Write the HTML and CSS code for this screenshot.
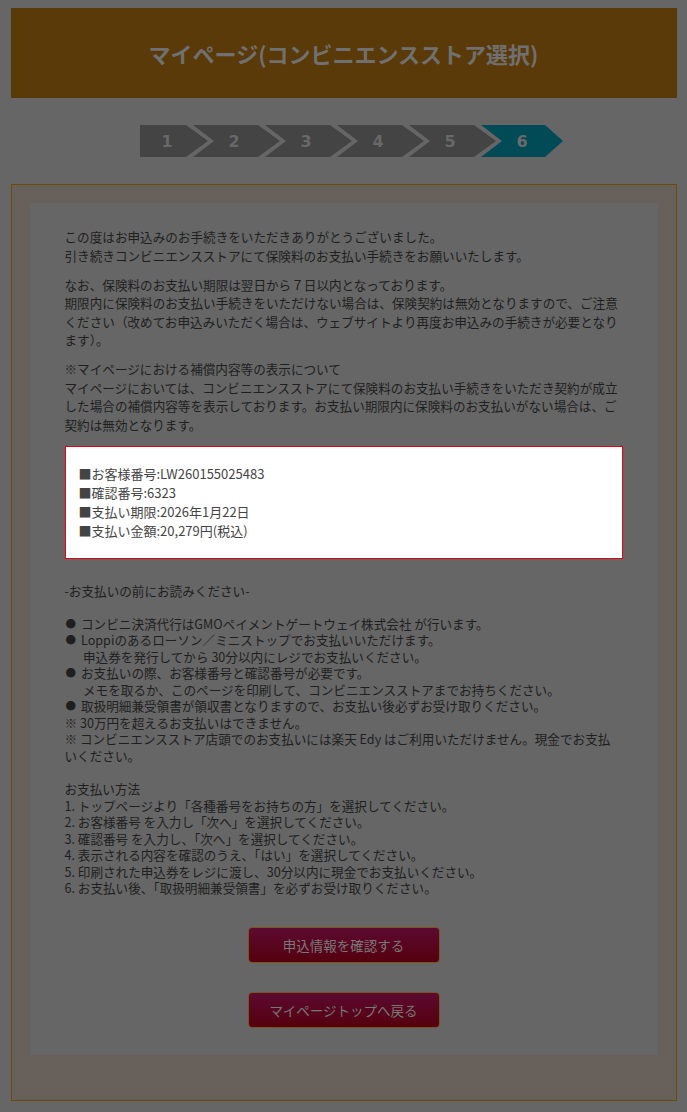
FILE: index.html
```html
<!DOCTYPE html>
<html lang="ja">
<head>
<meta charset="utf-8">
<title>マイページ(コンビニエンスストア選択)</title>
<link rel="stylesheet" href="styles.css">
</head>
<body>
<div class="page">
  <header class="header"><h1>マイページ(コンビニエンスストア選択)</h1></header>

  <ol class="steps">
    <li class="step step-first">1</li>
    <li class="step step-next">2</li>
    <li class="step step-next">3</li>
    <li class="step step-next">4</li>
    <li class="step step-next">5</li>
    <li class="step step-next step-active">6</li>
  </ol>

  <section class="box">
    <div class="panel">
      <p>この度はお申込みのお手続きをいただきありがとうございました。<br>引き続きコンビニエンスストアにて保険料のお支払い手続きをお願いいたします。</p>
      <p>なお、保険料のお支払い期限は翌日から７日以内となっております。<br>期限内に保険料のお支払い手続きをいただけない場合は、保険契約は無効となりますので、ご注意ください（改めてお申込みいただく場合は、ウェブサイトより再度お申込みの手続きが必要となります）。</p>
      <p>※マイページにおける補償内容等の表示について<br>マイページにおいては、コンビニエンスストアにて保険料のお支払い手続きをいただき契約が成立した場合の補償内容等を表示しております。お支払い期限内に保険料のお支払いがない場合は、ご契約は無効となります。</p>

      <div class="info">
        <div>■お客様番号:LW260155025483</div>
        <div>■確認番号:6323</div>
        <div>■支払い期限:2026年1月22日</div>
        <div>■支払い金額:20,279円(税込)</div>
      </div>

      <div class="notes">
        <div class="notes-title">-お支払いの前にお読みください-</div>
        <ul class="bullets">
          <li><span class="dot">●</span><span class="txt">コンビニ決済代行はGMOペイメントゲートウェイ株式会社 が行います。</span></li>
          <li><span class="dot">●</span><span class="txt">Loppiのあるローソン／ミニストップでお支払いいただけます。<span class="cont">申込券を発行してから 30分以内にレジでお支払いください。</span></span></li>
          <li><span class="dot">●</span><span class="txt">お支払いの際、お客様番号と確認番号が必要です。<span class="cont">メモを取るか、このページを印刷して、コンビニエンスストアまでお持ちください。</span></span></li>
          <li><span class="dot">●</span><span class="txt">取扱明細兼受領書が領収書となりますので、お支払い後必ずお受け取りください。</span></li>
        </ul>
        <div>※ 30万円を超えるお支払いはできません。</div>
        <div>※ コンビニエンスストア店頭でのお支払いには楽天 Edy はご利用いただけません。現金でお支払いください。</div>

        <div class="method-title">お支払い方法</div>
        <ol class="method">
          <li>1.&nbsp;トップページより「各種番号をお持ちの方」を選択してください。</li>
          <li>2.&nbsp;お客様番号 を入力し「次へ」を選択してください。</li>
          <li>3.&nbsp;確認番号 を入力し、「次へ」を選択してください。</li>
          <li>4.&nbsp;表示される内容を確認のうえ、「はい」を選択してください。</li>
          <li>5.&nbsp;印刷された申込券をレジに渡し、30分以内に現金でお支払いください。</li>
          <li>6.&nbsp;お支払い後、「取扱明細兼受領書」を必ずお受け取りください。</li>
        </ol>
      </div>

      <div class="actions">
        <a class="btn" href="#">申込情報を確認する</a>
        <a class="btn" href="#">マイページトップへ戻る</a>
      </div>
    </div>
  </section>
</div>
</body>
</html>
```

FILE: styles.css
```css
html, body {
  margin: 0;
  padding: 0;
}
body {
  background: #666666;
  font-family: "Noto Sans CJK JP", "Noto Sans", sans-serif;
}
.page {
  width: 666px;
  margin: 8px auto 0;
  padding-bottom: 10px;
}
.header {
  height: 90px;
  background: #5a3a08;
  display: flex;
  align-items: center;
  justify-content: center;
}
.header h1 {
  margin: 0;
  font-size: 22px;
  font-weight: bold;
  color: #707070;
}

.steps {
  list-style: none;
  display: flex;
  height: 32px;
  margin: 27px 0 27px 129.5px;
  padding: 0;
}
.step {
  height: 32px;
  box-sizing: border-box;
  display: flex;
  align-items: center;
  justify-content: center;
  background: #444444;
  color: #686868;
  font-family: "DejaVu Sans", sans-serif;
  font-weight: bold;
  font-size: 16px;
}
.step-first {
  width: 68px;
  padding-right: 14px;
  clip-path: polygon(0 0, 46px 0, 68px 16px, 46px 32px, 0 32px);
}
.step-next {
  width: 87px;
  margin-left: -15px;
  padding: 0 26px 0 21px;
  clip-path: polygon(0 0, 65px 0, 87px 16px, 65px 32px, 0 32px, 21px 16px);
}
.step-active {
  width: 82px;
  padding-right: 21px;
  background: #004b55;
  color: #6a6a6a;
  clip-path: polygon(0 0, 64px 0, 82px 16px, 64px 32px, 0 32px, 21px 16px);
}

.box {
  border: 1px solid #6b4a0b;
  background: #68605a;
  padding: 18px 18px 45px;
}
.panel {
  background: #666666;
  padding: 25px 35px 27px;
  color: #1f1f1f;
  font-size: 12.6px;
  line-height: 18.5px;
}
.panel p {
  margin: 0 0 10.5px;
}

.info {
  background: #ffffff;
  border: 1px solid #e60012;
  padding: 17px 13px 18px;
  margin-top: 12px;
  line-height: 19px;
  font-size: 13px;
  color: #444444;
}

.notes {
  margin-top: 23.5px;
  line-height: 16.55px;
}
.notes-title {
  margin-bottom: 16.55px;
}
.bullets {
  list-style: none;
  margin: 0;
  padding: 0;
}
.bullets li {
  display: flex;
}
.dot {
  flex: none;
  width: 16.5px;
  font-size: 10.5px;
  padding-left: 1px;
  box-sizing: border-box;
}
.txt {
  flex: 1;
}
.cont {
  display: block;
  padding-left: 2px;
}
.method-title {
  margin-top: 16.55px;
}
.method {
  list-style: none;
  margin: 0;
  padding: 0;
}

.actions {
  margin-top: 30px;
  display: flex;
  flex-direction: column;
  align-items: center;
  gap: 29px;
}
.btn {
  display: flex;
  align-items: center;
  justify-content: center;
  width: 192px;
  height: 36px;
  box-sizing: border-box;
  border: 1px solid #7a5520;
  border-radius: 4px;
  background: linear-gradient(#5c0a30, #55000e);
  color: #787878;
  font-size: 13.5px;
  text-decoration: none;
}
```
